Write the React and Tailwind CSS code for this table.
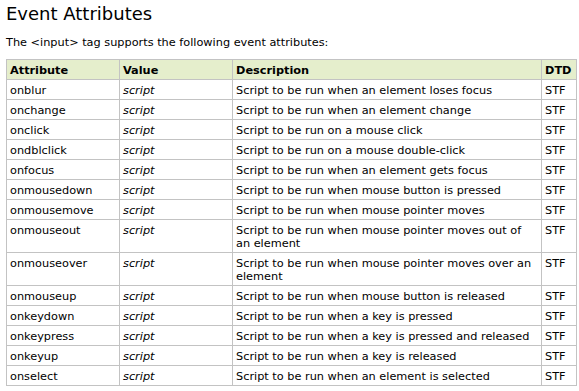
const rows = [
  ["onblur", "Script to be run when an element loses focus"],
  ["onchange", "Script to be run when an element change"],
  ["onclick", "Script to be run on a mouse click"],
  ["ondblclick", "Script to be run on a mouse double-click"],
  ["onfocus", "Script to be run when an element gets focus"],
  ["onmousedown", "Script to be run when mouse button is pressed"],
  ["onmousemove", "Script to be run when mouse pointer moves"],
  ["onmouseout", "Script to be run when mouse pointer moves out of an element"],
  ["onmouseover", "Script to be run when mouse pointer moves over an element"],
  ["onmouseup", "Script to be run when mouse button is released"],
  ["onkeydown", "Script to be run when a key is pressed"],
  ["onkeypress", "Script to be run when a key is pressed and released"],
  ["onkeyup", "Script to be run when a key is released"],
  ["onselect", "Script to be run when an element is selected"],
];

const cell = "border border-[#c3c3c3] px-[3px] pt-[4px] pb-[2px] align-top text-left";

export default function App() {
  return (
    <div className="min-h-screen bg-white px-[6px] text-black font-['DejaVu_Sans',Verdana,sans-serif]">
      <h2 className="pt-[3px] text-[18px] leading-[22px] font-normal">Event Attributes</h2>
      <p className="mt-[10px] text-[11.3px] leading-[15px]">
        The &lt;input&gt; tag supports the following event attributes:
      </p>
      <table className="mt-[9px] w-[570px] border-collapse text-[11.3px] leading-[13px] table-fixed">
        <colgroup>
          <col className="w-[113px]" />
          <col className="w-[113px]" />
          <col className="w-[309px]" />
          <col className="w-[35px]" />
        </colgroup>
        <thead>
          <tr className="bg-[#e5eecc]">
            <th className={`${cell} font-bold`}>Attribute</th>
            <th className={`${cell} font-bold`}>Value</th>
            <th className={`${cell} font-bold`}>Description</th>
            <th className={`${cell} font-bold`}>DTD</th>
          </tr>
        </thead>
        <tbody>
          {rows.map(([name, desc]) => (
            <tr key={name}>
              <td className={cell}>{name}</td>
              <td className={`${cell} italic`}>script</td>
              <td className={cell}>{desc}</td>
              <td className={cell}>STF</td>
            </tr>
          ))}
        </tbody>
      </table>
    </div>
  );
}
